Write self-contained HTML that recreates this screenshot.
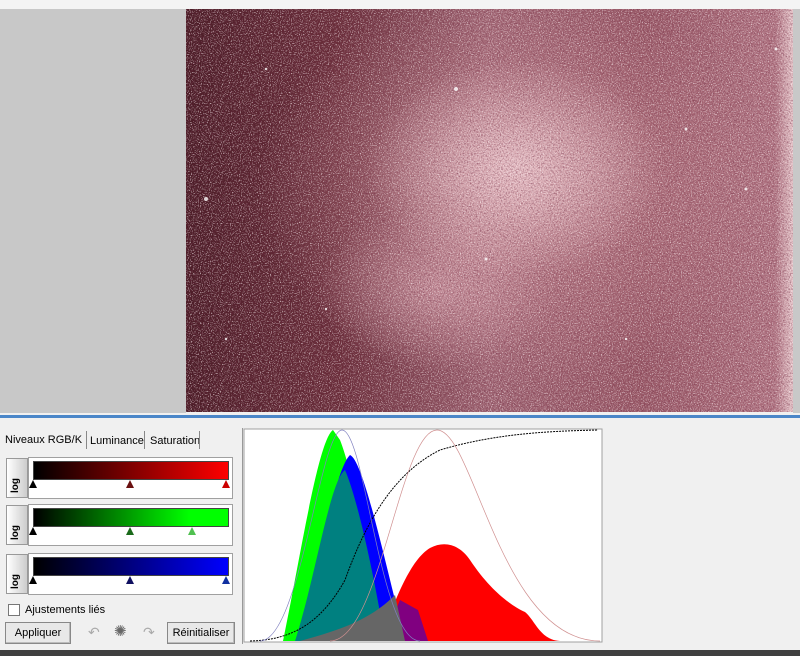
<!DOCTYPE html>
<html><head><style>
body{margin:0;width:800px;height:656px;background:#f0f0f0;position:relative;overflow:hidden;font-family:"Liberation Sans",sans-serif;font-size:11px;color:#000}
.a{position:absolute}
.img{left:186px;top:9px;width:607px;height:403px;
background:
radial-gradient(ellipse 150px 110px at 330px 160px,rgba(240,205,210,.85),rgba(240,205,210,0) 100%),
radial-gradient(ellipse 120px 80px at 250px 280px,rgba(220,170,180,.6),rgba(220,170,180,0)),
radial-gradient(ellipse 260px 200px at 330px 180px,rgba(200,140,150,.8),rgba(200,140,150,0)),
linear-gradient(90deg,#4a1c26 0%,#6a2e3a 25%,#a06674 50%,#9a5a68 75%,#b27684 97%,#e8c8cc 100%);}
.box{position:absolute;left:28px;width:203px;background:#fff;border:1px solid #a0a0a0}
.bar{position:absolute;left:4px;width:194px;height:17px;top:3px;border:1px solid #444}
.log{position:absolute;left:6px;width:20px;height:38px;background:linear-gradient(90deg,#fff,#ccc);border:1px solid #999;font-size:10px;font-weight:bold}
.log span{position:absolute;bottom:4px;transform:rotate(-90deg);transform-origin:left bottom;left:14px}
.btn{position:absolute;height:20px;border:1px solid #888;background:#e8e8e8;text-align:center;line-height:20px;box-shadow:inset -1px -1px #bbb}
.tri{position:absolute;width:0;height:0;border-left:4px solid transparent;border-right:4px solid transparent;border-bottom:8px solid #000;top:22px}
</style></head><body>
<div class="a" style="left:0;top:0;width:800px;height:9px;background:#f4f4f4"></div>
<div class="a" style="left:0;top:9px;width:186px;height:404px;background:#c8c8c8"></div>
<div class="a" style="left:793px;top:9px;width:7px;height:404px;background:#c8c8c8"></div>
<div class="a img"></div>
<svg class="a" style="left:186px;top:9px" width="607" height="403">
<filter id="n"><feTurbulence type="fractalNoise" baseFrequency="0.9" numOctaves="1" seed="3"/>
<feColorMatrix values="0 0 0 0 1  0 0 0 0 0.9  0 0 0 0 0.92  3 0 0 0 -1.55"/></filter>
<filter id="d"><feTurbulence type="fractalNoise" baseFrequency="0.7" numOctaves="1" seed="7"/>
<feColorMatrix values="0 0 0 0 0.15  0 0 0 0 0.02  0 0 0 0 0.05  2.5 0 0 0 -1.1"/></filter>
<rect width="607" height="403" filter="url(#d)" opacity=".6"/>
<rect width="607" height="403" filter="url(#n)" opacity=".9"/>
<g fill="#fff" opacity=".8">
<circle cx="20" cy="190" r="2"/><circle cx="80" cy="60" r="1.2"/><circle cx="270" cy="80" r="2"/><circle cx="500" cy="120" r="1.5"/><circle cx="560" cy="180" r="1.5"/><circle cx="140" cy="300" r="1.2"/><circle cx="440" cy="330" r="1.2"/><circle cx="300" cy="250" r="1.5"/><circle cx="40" cy="330" r="1.2"/><circle cx="590" cy="40" r="1.5"/></g>
</svg>
<div class="a" style="left:0;top:415px;width:800px;height:3px;background:#4a86c8"></div>
<div class="a" style="left:5px;top:434px">Niveaux RGB/K</div>
<div class="a" style="left:86px;top:431px;width:1px;height:18px;background:#888"></div>
<div class="a" style="left:90px;top:435px">Luminance</div>
<div class="a" style="left:144px;top:431px;width:1px;height:18px;background:#888"></div>
<div class="a" style="left:150px;top:435px">Saturation</div>
<div class="a" style="left:199px;top:431px;width:1px;height:18px;background:#888"></div>

<div class="box" style="top:457px;height:40px"><div class="bar" style="background:linear-gradient(90deg,#000,#ff0000)"></div>
<div class="tri" style="left:0"></div><div class="tri" style="left:97px;border-bottom-color:#6a1010"></div><div class="tri" style="left:193px;border-bottom-color:#c00"></div></div>
<div class="box" style="top:504px;height:40px"><div class="bar" style="background:linear-gradient(90deg,#000,#00ff00 80%,#00ff00)"></div>
<div class="tri" style="left:0"></div><div class="tri" style="left:97px;border-bottom-color:#1a6a1a"></div><div class="tri" style="left:159px;border-bottom-color:#50c050"></div></div>
<div class="box" style="top:553px;height:40px"><div class="bar" style="background:linear-gradient(90deg,#000,#0000ff)"></div>
<div class="tri" style="left:0"></div><div class="tri" style="left:97px;border-bottom-color:#101060"></div><div class="tri" style="left:193px;border-bottom-color:#1030a0"></div></div>
<div class="log" style="top:458px"><span>log</span></div>
<div class="log" style="top:505px"><span>log</span></div>
<div class="log" style="top:554px"><span>log</span></div>

<div class="a" style="left:8px;top:604px;width:10px;height:10px;border:1px solid #777;background:#fff"></div>
<div class="a" style="left:25px;top:604px">Ajustements liés</div>
<div class="btn" style="left:5px;top:622px;width:64px">Appliquer</div>
<div class="a" style="left:88px;top:624px;color:#aaa;font-size:14px">↶</div>
<div class="a" style="left:114px;top:622px;color:#666;font-size:15px">✺</div>
<div class="a" style="left:143px;top:624px;color:#aaa;font-size:14px">↷</div>
<div class="btn" style="left:167px;top:622px;width:66px">Réinitialiser</div>
<div class="a" style="left:242px;top:428px;width:1px;height:216px;background:#999"></div>

<svg class="a" style="left:0;top:0" width="800" height="656">
<rect x="244" y="429" width="358" height="213" fill="#fff" stroke="#a0a0a0"/>
<path d="M283 641 C300 560 318 440 333 430 L340 440 C352 470 370 560 395 641Z" fill="#00ff00"/>
<path d="M300 641 C320 560 335 470 350 455 C362 460 380 540 395 600 L410 641Z" fill="#0000ff"/>
<path d="M295 641 C315 580 330 480 345 470 C358 500 375 580 385 641Z" fill="#008080"/>
<path d="M380 641 C395 600 410 560 430 548 C445 540 460 545 470 560 C490 590 510 605 525 612 C535 620 540 640 560 641Z" fill="#ff0000"/>
<path d="M384 641 C390 625 395 612 400 600 L418 610 L428 641Z" fill="#800080"/>
<path d="M300 641 C340 630 370 620 395 595 L405 641Z" fill="#666"/>
<path d="M250 641 C290 640 320 625 345 580 C370 510 400 470 440 450 C500 432 560 431 598 430" fill="none" stroke="#000" stroke-dasharray="2 1"/>
<path d="M330 641 C380 641 400 430 437 430 C474 430 500 641 600 641" fill="none" stroke="#d09090" stroke-width=".7"/>
<path d="M260 641 C300 641 320 430 342 430 C365 430 380 641 420 641" fill="none" stroke="#8080c0" stroke-width=".7"/>
</svg>
<div class="a" style="left:0;top:650px;width:800px;height:6px;background:#404040"></div>
</body></html>
